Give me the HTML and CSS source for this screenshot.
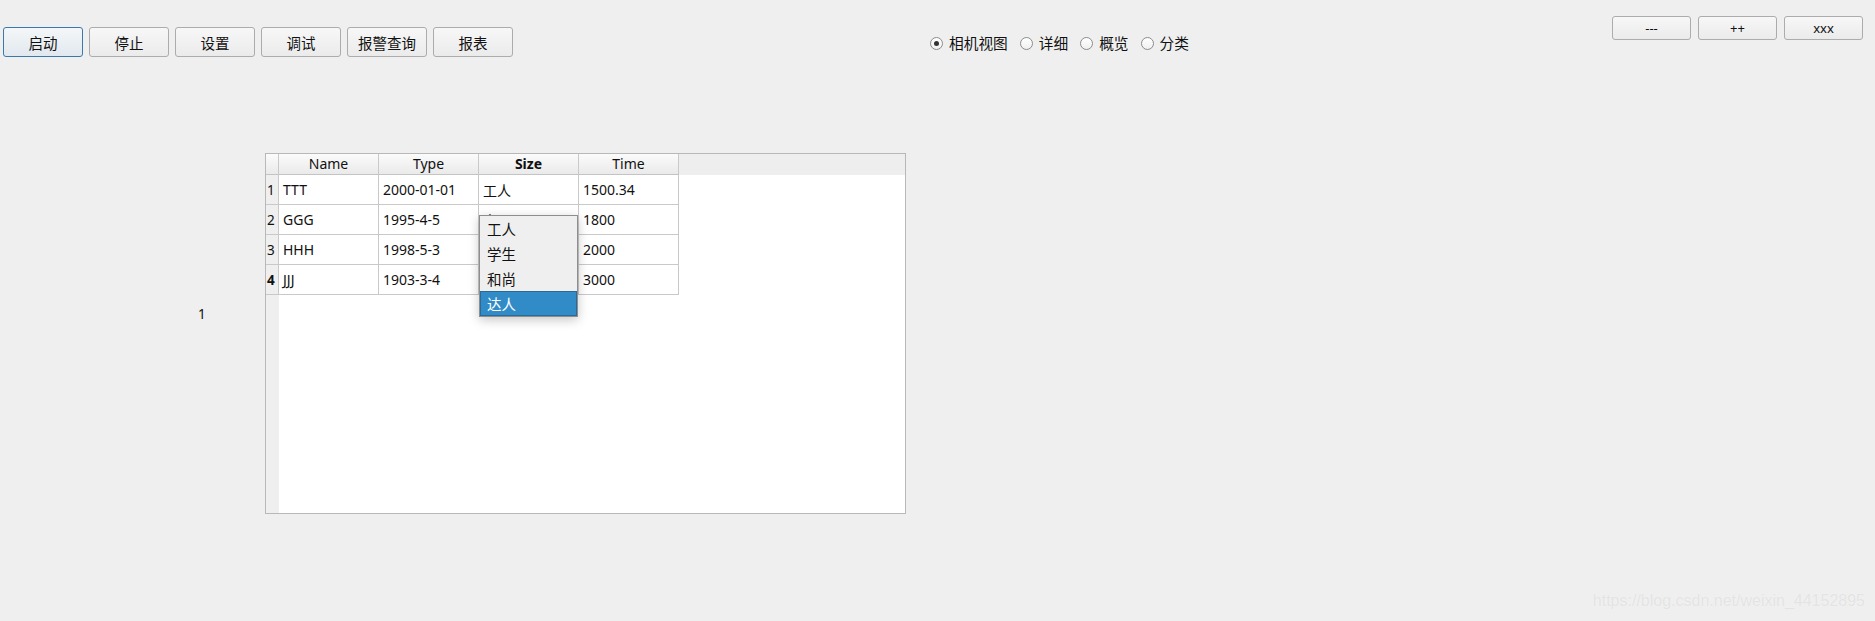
FILE: index.html
```html
<!DOCTYPE html>
<html lang="zh">
<head>
<meta charset="utf-8">
<title>Demo</title>
<link rel="stylesheet" href="styles.css">
</head>
<body>
<div class="topbar">
  <div class="btns">
    <button class="btn focus">启动</button>
    <button class="btn">停止</button>
    <button class="btn">设置</button>
    <button class="btn">调试</button>
    <button class="btn">报警查询</button>
    <button class="btn">报表</button>
  </div>
  <div class="radios">
    <label class="radio"><span class="dot checked"></span>相机视图</label>
    <label class="radio"><span class="dot"></span>详细</label>
    <label class="radio"><span class="dot"></span>概览</label>
    <label class="radio"><span class="dot"></span>分类</label>
  </div>
  <div class="rbtns">
    <button class="btn small">---</button>
    <button class="btn small">++</button>
    <button class="btn small">xxx</button>
  </div>
</div>

<div class="main">
  <div class="num">1</div>
  <div class="frame">
    <div class="grid">
      <div class="corner"></div>
      <div class="hcell">Name</div>
      <div class="hcell">Type</div>
      <div class="hcell bold">Size</div>
      <div class="hcell">Time</div>
      <div class="hfill"></div>

      <div class="vcell">1</div>
      <div class="cell">TTT</div>
      <div class="cell">2000-01-01</div>
      <div class="cell">工人</div>
      <div class="cell">1500.34</div>
      <div class="blank"></div>

      <div class="vcell">2</div>
      <div class="cell">GGG</div>
      <div class="cell">1995-4-5</div>
      <div class="cell under">高品</div>
      <div class="cell">1800</div>
      <div class="blank"></div>

      <div class="vcell">3</div>
      <div class="cell">HHH</div>
      <div class="cell">1998-5-3</div>
      <div class="cell"></div>
      <div class="cell">2000</div>
      <div class="blank"></div>

      <div class="vcell bold">4</div>
      <div class="cell">JJJ</div>
      <div class="cell">1903-3-4</div>
      <div class="cell"></div>
      <div class="cell">3000</div>
      <div class="blank"></div>

      <div class="vrest"></div>
      <div class="rest"></div>
    </div>
    <ul class="popup">
      <li>工人</li>
      <li>学生</li>
      <li>和尚</li>
      <li class="sel">达人</li>
    </ul>
  </div>
</div>

<div class="footer">https://blog.csdn.net/weixin_44152895</div>
</body>
</html>
```

FILE: styles.css
```css
html, body {
  margin: 0;
  padding: 0;
}
body {
  background: #efefef;
  font-family: "Noto Sans", "Noto Sans CJK SC", sans-serif;
  font-size: 14px;
  color: #111;
  width: 1875px;
  height: 621px;
  overflow: hidden;
}

.topbar {
  display: flex;
  align-items: flex-start;
  height: 57px;
}
.btns {
  display: flex;
  gap: 6px;
  padding-top: 27px;
  padding-left: 3px;
}
.btn {
  box-sizing: border-box;
  width: 80px;
  height: 30px;
  border: 1px solid #acacac;
  border-radius: 3px;
  background: linear-gradient(#f7f7f7, #ebebeb);
  font-family: "Noto Sans CJK SC", "Noto Sans", sans-serif;
  font-size: 14.5px;
  color: #111;
  padding: 0;
  margin: 0;
}
.btn.focus {
  border-color: #3a79ad;
  background: linear-gradient(#f4f7f9, #e1e8ee);
}

.radios {
  display: flex;
  align-items: center;
  gap: 12px;
  margin-left: 417px;
  padding-top: 33px;
  height: 20px;
}
.radio {
  display: flex;
  align-items: center;
  font-family: "Noto Sans CJK SC", sans-serif;
  font-size: 14.7px;
  line-height: 20px;
}
.dot {
  box-sizing: border-box;
  width: 13px;
  height: 13px;
  border: 1px solid #8c8c8c;
  border-radius: 50%;
  background: linear-gradient(#ffffff, #f0f0f0);
  margin-right: 6px;
  display: flex;
  align-items: center;
  justify-content: center;
}
.dot.checked::after {
  content: "";
  width: 5px;
  height: 5px;
  border-radius: 50%;
  background: #333;
}

.rbtns {
  display: flex;
  gap: 7px;
  margin-left: auto;
  padding-right: 12px;
  padding-top: 16px;
}
.btn.small {
  width: 79px;
  height: 24px;
  font-family: "Noto Sans", sans-serif;
  font-size: 13px;
}

.main {
  display: flex;
  align-items: flex-start;
  padding-top: 96px;
  padding-left: 198px;
}
.num {
  width: 67px;
  margin-top: 153px;
  font-size: 13.5px;
  line-height: 16px;
}
.frame {
  position: relative;
  box-sizing: border-box;
  width: 641px;
  height: 361px;
  border: 1px solid #b8b8b8;
  background: #fff;
}
.grid {
  display: grid;
  grid-template-columns: 13px repeat(4, 100px) 1fr;
  grid-template-rows: 21px repeat(4, 30px) 1fr;
  height: 100%;
  font-size: 14px;
}
.corner, .hcell {
  box-sizing: border-box;
  border-right: 1px solid #c9c9c9;
  border-bottom: 1px solid #c4c4c4;
  background: linear-gradient(#fbfbfb, #eaeaea);
}
.hcell {
  display: flex;
  align-items: center;
  justify-content: center;
  line-height: 20px;
  font-size: 14px;
}
.hfill {
  background: #eeeeee;
}
.bold {
  font-weight: bold;
}
.vcell {
  box-sizing: border-box;
  border-right: 1px solid #c9c9c9;
  border-bottom: 1px solid #c9c9c9;
  background: #efefef;
  display: flex;
  align-items: center;
  padding-left: 1px;
  font-size: 13.5px;
}
.cell {
  box-sizing: border-box;
  border-right: 1px solid #c9c9c9;
  border-bottom: 1px solid #c9c9c9;
  display: flex;
  align-items: center;
  padding-left: 4px;
  font-family: "Noto Sans", "Noto Sans CJK SC", sans-serif;
}
.cell.under {
  align-items: flex-start;
  padding-top: 5px;
}
.blank {
  background: #fff;
}
.vrest {
  background: #efefef;
}
.rest {
  grid-column: 2 / 7;
  background: #fff;
}

.popup {
  position: absolute;
  left: 213px;
  top: 61px;
  box-sizing: border-box;
  width: 99px;
  height: 102px;
  margin: 0;
  padding: 0;
  list-style: none;
  border: 1px solid #8e8e8e;
  background: #efefef;
  box-shadow: 0 3px 10px rgba(0, 0, 0, 0.22);
  font-family: "Noto Sans CJK SC", sans-serif;
  font-size: 14.5px;
}
.popup li {
  box-sizing: border-box;
  height: 25px;
  line-height: 25px;
  padding-left: 7px;
}
.popup li.sel {
  background: #308bc7;
  color: #fff;
  border: 1px solid #2a6a98;
  line-height: 23px;
  padding-left: 6px;
}

.footer {
  margin-top: 77px;
  padding-right: 10px;
  text-align: right;
  font-family: "Liberation Sans", sans-serif;
  font-size: 16px;
  line-height: 20px;
  color: #e3e3e3;
  text-shadow: 0 0 1px #fafafa;
}
```
